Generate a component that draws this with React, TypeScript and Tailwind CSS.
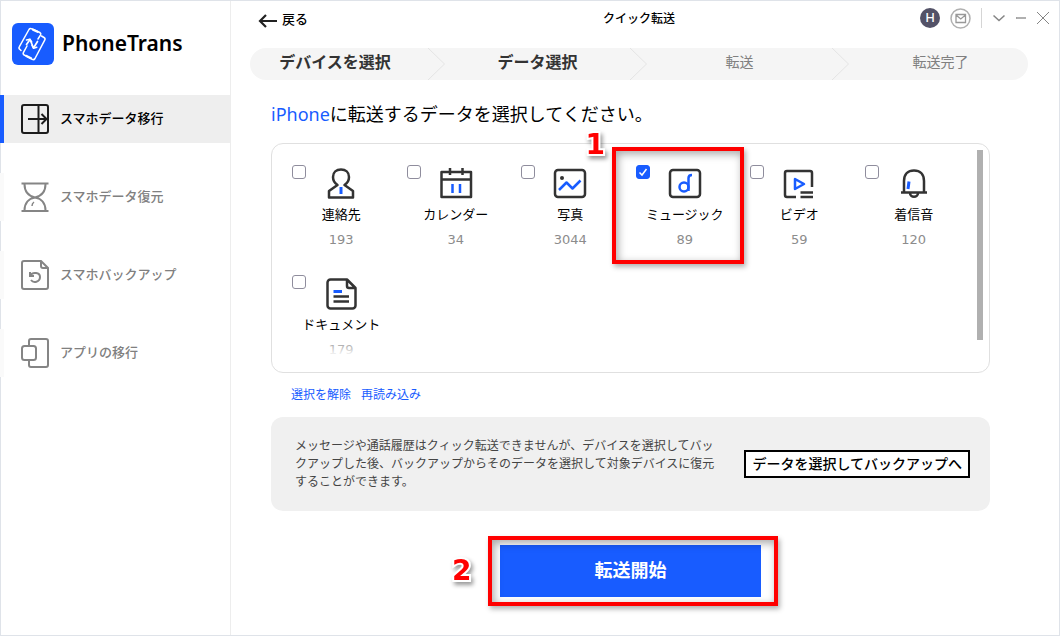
import { useState } from 'react';
import type { ReactNode } from 'react';

const menu = [
  { id: 'transfer', label: 'スマホデータ移行' },
  { id: 'restore', label: 'スマホデータ復元' },
  { id: 'backup', label: 'スマホバックアップ' },
  { id: 'apps', label: 'アプリの移行' },
];

const dataTypes = [
  { id: 'contacts', label: '連絡先', count: 193 },
  { id: 'calendar', label: 'カレンダー', count: 34 },
  { id: 'photos', label: '写真', count: 3044 },
  { id: 'music', label: 'ミュージック', count: 89 },
  { id: 'video', label: 'ビデオ', count: 59 },
  { id: 'ringtones', label: '着信音', count: 120 },
  { id: 'documents', label: 'ドキュメント', count: 179 },
];

// ================= ICONS =================
const menuIcons: Record<string, ReactNode> = {
  transfer: (
    <>
      <rect x="2" y="2" width="26" height="28" rx="2" />
      <path d="M18.5 2v28M8 16h18M21.5 11l5 5-5 5" />
    </>
  ),
  restore: (
    <>
      <path d="M1.5 2.5h27M1.5 30h27" />
      <path d="M4.500 3c0 7 4 12 10.500 13.500C21.500 15 25.500 10 25.500 3M4.500 29.500c0-7 4-12 10.500-13 6.500 1 10.500 6 10.500 13" />
      <path d="M14 21c-1.500 1-2 2-2 4" strokeWidth="1.500" />
    </>
  ),
  backup: (
    <>
      <path d="M21 2H4a2 2 0 0 0-2 2v24a2 2 0 0 0 2 2h22a2 2 0 0 0 2-2V9zM21 2v5a2 2 0 0 0 2 2h5" />
      <path d="M10 13v4h4M10.500 16.500c2-4 9.500-3 9.500 1.500 0 5-6.500 6.500-9 3" />
    </>
  ),
  apps: (
    <>
      <path d="M9 9V4a2 2 0 0 1 2-2h15a2 2 0 0 1 2 2v24a2 2 0 0 1-2 2H11a2 2 0 0 1-2-2v-5" />
      <rect x="2" y="9" width="14" height="14" rx="2.500" />
    </>
  ),
};

const dataIcons: Record<string, ReactNode> = {
  contacts: (
    <>
      <path d="M14.500 19c-3-2-4.500-4.500-4.500-8 0-5 3.500-7.500 8-7.500s8 2.500 8 7.500c0 3.500-1.500 6-4.500 8l8.500 6v6.500H6V25z" />
      <path d="M18 21v7" stroke="#185cff" strokeWidth="3" />
    </>
  ),
  calendar: (
    <>
      <path d="M3.500 6H33v25H3.500zM3.500 13.500H33M12 2v7M24.500 2v7" />
      <path d="M14.500 18v9M22 18v9" stroke="#185cff" strokeWidth="2.500" />
    </>
  ),
  photos: (
    <>
      <rect x="3" y="4" width="30" height="27" rx="3" />
      <circle cx="10" cy="12" r="2" fill="#333" stroke="none" />
      <path d="M7 24l7.500-7.500 6 6 8-8" stroke="#185cff" strokeWidth="2.500" />
    </>
  ),
  music: (
    <>
      <rect x="3" y="4" width="30" height="27" rx="3" />
      <circle cx="17" cy="21" r="4.500" stroke="#185cff" />
      <path d="M21.500 25V12c0-2 1-3 3.500-3" stroke="#185cff" strokeWidth="2.500" />
    </>
  ),
  video: (
    <>
      <path d="M15 31H6a2 2 0 0 1-2-2V7a2 2 0 0 1 2-2h23a2 2 0 0 1 2 2v14M19.500 26.500H32M19.500 31H32" />
      <path d="M14 13v10l9-5z" stroke="#185cff" strokeWidth="2.500" />
    </>
  ),
  ringtones: (
    <>
      <path d="M5 26.500h26M8 26V15c0-7 4-10.500 10-10.500S28 8 28 15v11M14 27c0 5 8 5 8 0" />
      <path d="M13 15.500l-1 7.500" stroke="#185cff" strokeWidth="3" />
    </>
  ),
  documents: (
    <>
      <path d="M24 3.500H7.500a3 3 0 0 0-3 3v23a3 3 0 0 0 3 3h22a3 3 0 0 0 3-3V12zM24 3.500V10a2 2 0 0 0 2 2h6.500" />
      <path d="M10.500 20.500h15.500M10.500 25.500h15.500" />
      <path d="M10.500 15.500h8.500" stroke="#185cff" strokeWidth="3" />
    </>
  ),
};

function Logo() {
  return (
    <svg width="42" height="42" viewBox="0 0 42 42" fill="none" stroke="#fff" strokeWidth="1.500" strokeLinecap="round" strokeLinejoin="round">
      <rect width="42" height="42" rx="6" fill="#185cff" stroke="none" />
      <path d="M9 27.500l-1.200-1.200c-1-.7-1-1.700-.4-2.700L17 6.500c.6-1 1.600-1.300 2.700-.7l8.100 3.700c1 .6 1.300 1.400.8 2.400L26 16" />
      <path d="M29.500 13l2.500 1.500c1 .6 1.300 1.700.7 2.700L23 35.500c-.6 1-1.600 1.400-2.700.8L12.200 32c-1-.6-1.300-1.600-.7-2.700L15 23" />
      <path d="M21 6.800l4.500 2M14.500 33l4.500 2.200" strokeWidth="2.200" />
      <path d="M14.500 21.500l3.500-5 3.500 8.500 4-6.500" strokeWidth="1.700" />
      <path d="M14.500 17l3.500-.7 1.700 2.700M20 22.500l1.500 2.700 3.300-1" />
    </svg>
  );
}

function StepArrow() {
  return (
    <svg className="shrink-0" width="17" height="32" viewBox="0 0 17 32" fill="none" stroke="#e4e4e4">
      <path d="M0 0l16.500 16L0 32" />
    </svg>
  );
}

function Marker({ children, place }: { children: string; place: string }) {
  return (
    <span
      className={`pointer-events-none absolute font-['DejaVu_Sans',sans-serif] text-[28px] leading-6 font-bold text-[#f00] [-webkit-text-stroke:4px_white] [paint-order:stroke_fill] [filter:drop-shadow(2px_3px_2px_rgba(0,0,0,0.4))] ${place}`}
    >
      {children}
    </span>
  );
}

function RedFrame({ place }: { place: string }) {
  return (
    <span
      className={`pointer-events-none absolute border-4 border-[#f00] shadow-[2px_3px_5px_rgba(0,0,0,0.3),inset_2px_3px_8px_rgba(0,0,0,0.35)] ${place}`}
    />
  );
}

export default function App() {
  const [active, setActive] = useState('transfer');
  const [selected, setSelected] = useState<string[]>(['music']);

  const toggle = (id: string) => {
    setSelected(
      selected.includes(id) ? selected.filter((s) => s !== id) : [...selected, id]
    );
  };

  return (
    <div className="flex min-h-screen border border-[#dfe3e9] bg-white font-['Noto_Sans','Noto_Sans_CJK_JP',sans-serif] text-black">
      {/* ================= SIDEBAR ================= */}
      <aside className="-ml-px w-[231px] shrink-0 border-r border-[#ededed]">
        <div className="flex items-center gap-2 pt-[22px] pl-3">
          <Logo />
          <span className="text-[21px] font-semibold">PhoneTrans</span>
        </div>

        <nav className="mt-[30px] flex flex-col gap-[30px]">
          {menu.map((item) => (
            <button
              key={item.id}
              onClick={() => setActive(item.id)}
              className={`flex h-12 items-center gap-[10px] border-l-4 pl-4 text-[13px] ${
                active === item.id
                  ? 'border-[#185cff] bg-[#eee] font-medium text-black'
                  : 'border-[#fafafa] font-medium text-[#808080]'
              }`}
            >
              <svg
                width="30"
                height="32"
                viewBox="0 0 30 32"
                fill="none"
                stroke={active === item.id ? '#1c1c1c' : '#858585'}
                strokeWidth="2"
              >
                {menuIcons[item.id]}
              </svg>
              {item.label}
            </button>
          ))}
        </nav>
      </aside>

      <main className="min-w-0 flex-1">
        {/* ================= HEADER ================= */}
        <header className="mr-[31px] ml-[19px] grid h-9 grid-cols-[1fr_auto_1fr] items-center">
          <button className="flex items-center gap-1 justify-self-start pt-0.5 pl-2 text-[13px] font-medium">
            <svg width="20" height="16" viewBox="0 0 20 16" fill="none" stroke="#222" strokeWidth="2.200">
              <path d="M19 9H2M8 3L2 9l6 6" />
            </svg>
            戻る
          </button>
          <h1 className="text-xs font-medium">クイック転送</h1>
          <div className="-mr-[22px] flex items-center justify-self-end pb-0.5 text-[#858585]">
            <span className="flex size-5 items-center justify-center rounded-full bg-[#535267] text-[13px] font-medium text-white">
              H
            </span>
            <button aria-label="メール" className="ml-[10px]">
              <svg width="21" height="21" viewBox="0 0 21 21" fill="none" stroke="#b0b0b0">
                <circle cx="10.500" cy="10.500" r="9.500" strokeWidth="1.500" />
                <path d="M6 6.500h9.500v8H6zM6 7l4.750 4 4.750-4" stroke="#999" strokeWidth="1.300" />
              </svg>
            </button>
            <span className="mx-[10px] h-5 w-px bg-[#d5d5d5]" />
            <button aria-label="メニュー">
              <svg width="14" height="14" viewBox="0 0 14 14" fill="none" stroke="currentColor" strokeWidth="1.500">
                <path d="M1.500 4.500L7 9.500l5.500-5" />
              </svg>
            </button>
            <button aria-label="最小化" className="ml-2">
              <svg width="14" height="14" viewBox="0 0 14 14" fill="none" stroke="currentColor" strokeWidth="1.300">
                <path d="M2 7h10" />
              </svg>
            </button>
            <button aria-label="閉じる" className="ml-2">
              <svg width="14" height="14" viewBox="0 0 14 14" fill="none" stroke="currentColor">
                <path d="M1 1l12 12M13 1L1 13" />
              </svg>
            </button>
          </div>
        </header>

        {/* ================= STEPS ================= */}
        <ol className="mt-[11px] mr-[31px] ml-[19px] grid h-8 grid-cols-[195fr_202fr_202fr_179fr] rounded-full bg-[#f5f5f5]">
          <li className="flex items-center font-bold text-[#333]">
            <span className="flex-1 pr-2 pb-1 text-center">デバイスを選択</span>
            <StepArrow />
          </li>
          <li className="flex items-center font-bold text-[#333]">
            <span className="flex-1 pb-1 text-center">データ選択</span>
            <StepArrow />
          </li>
          <li className="flex items-center text-sm text-[#808080]">
            <span className="flex-1 pb-1 text-center">転送</span>
            <StepArrow />
          </li>
          <li className="flex items-center text-sm text-[#808080]">
            <span className="flex-1 pb-1 pl-1 text-center">転送完了</span>
          </li>
        </ol>

        <section className="mr-[69px] ml-10">
          <h2 className="mt-5 text-lg leading-7">
            <span className="text-[#185cff]">iPhone</span>に転送するデータを選択してください。
          </h2>

          {/* ================= DATA LIST ================= */}
          <div className="relative mt-[15px] flex rounded-xl border border-[#e0e0e0]">
            <div className="mt-[21px] mr-[6px] mb-3 ml-3 grid flex-1 grid-cols-6 gap-y-[25px]">
              {dataTypes.map((item) => (
                <label key={item.id} className="relative flex flex-col items-center pt-px">
                  <input
                    type="checkbox"
                    checked={selected.includes(item.id)}
                    onChange={() => toggle(item.id)}
                    className="absolute top-0 left-2 size-[14px] appearance-none rounded-[3px] border border-[#8f8d9d] checked:border-[#185cff] checked:bg-[#185cff]"
                  />
                  {selected.includes(item.id) && (
                    <svg className="pointer-events-none absolute top-0 left-2" width="14" height="14" viewBox="0 0 14 14" fill="none" stroke="#fff" strokeWidth="1.500">
                      <path d="M3.500 7.500l2.500 2.500 4.500-6" />
                    </svg>
                  )}
                  <svg width="36" height="36" viewBox="0 0 36 36" fill="none" stroke="#333" strokeWidth="2.500" strokeLinejoin="round">
                    {dataIcons[item.id]}
                  </svg>
                  <span className="mt-0.5 text-[13px] leading-5 whitespace-nowrap">{item.label}</span>
                  <span className="mt-[6px] font-['DejaVu_Sans',sans-serif] text-[13px] leading-5 text-[#8c8c8c]">
                    {item.count}
                  </span>
                  {item.id === 'music' && (
                    <>
                      <RedFrame place="-top-[18px] -bottom-[14px] -left-4 -right-0.5" />
                      <Marker place="-top-8 -left-[42px]">1</Marker>
                    </>
                  )}
                </label>
              ))}
            </div>
            <div className="mt-[6px] mr-[6px] h-[190px] w-[6px] bg-[#b0b0b0]" />
            <div className="pointer-events-none absolute right-8 bottom-4 left-3 h-4 bg-linear-to-b from-transparent to-white" />
          </div>

          <div className="mt-3 flex gap-[10px] pl-5 text-xs leading-5 text-[#185cff]">
            <a href="#clear">選択を解除</a>
            <a href="#reload">再読み込み</a>
          </div>

          {/* ================= BACKUP NOTE ================= */}
          <div className="mt-3 flex items-center justify-between rounded-xl bg-[#f0f0f0] py-5 pr-5 pl-6">
            <p className="w-[424px] text-xs leading-[18px] text-[#444]">
              メッセージや通話履歴はクィック転送できませんが、デバイスを選択してバックアップした後、バックアップからそのデータを選択して対象デバイスに復元することができます。
            </p>
            <button className="h-7 border-2 border-black bg-white px-[6px] text-sm leading-6 font-medium whitespace-nowrap">
              データを選択してバックアップへ
            </button>
          </div>

          {/* ================= START ================= */}
          <div className="relative mx-auto mt-[34px] mb-9 w-[261px]">
            <button className="h-[52px] w-full bg-[#185cff] pb-0.5 text-lg font-bold text-white">転送開始</button>
            <RedFrame place="-top-[9px] -bottom-[9px] -left-3 -right-[17px]" />
            <Marker place="top-[14px] -left-12">2</Marker>
          </div>
        </section>
      </main>
    </div>
  );
}
